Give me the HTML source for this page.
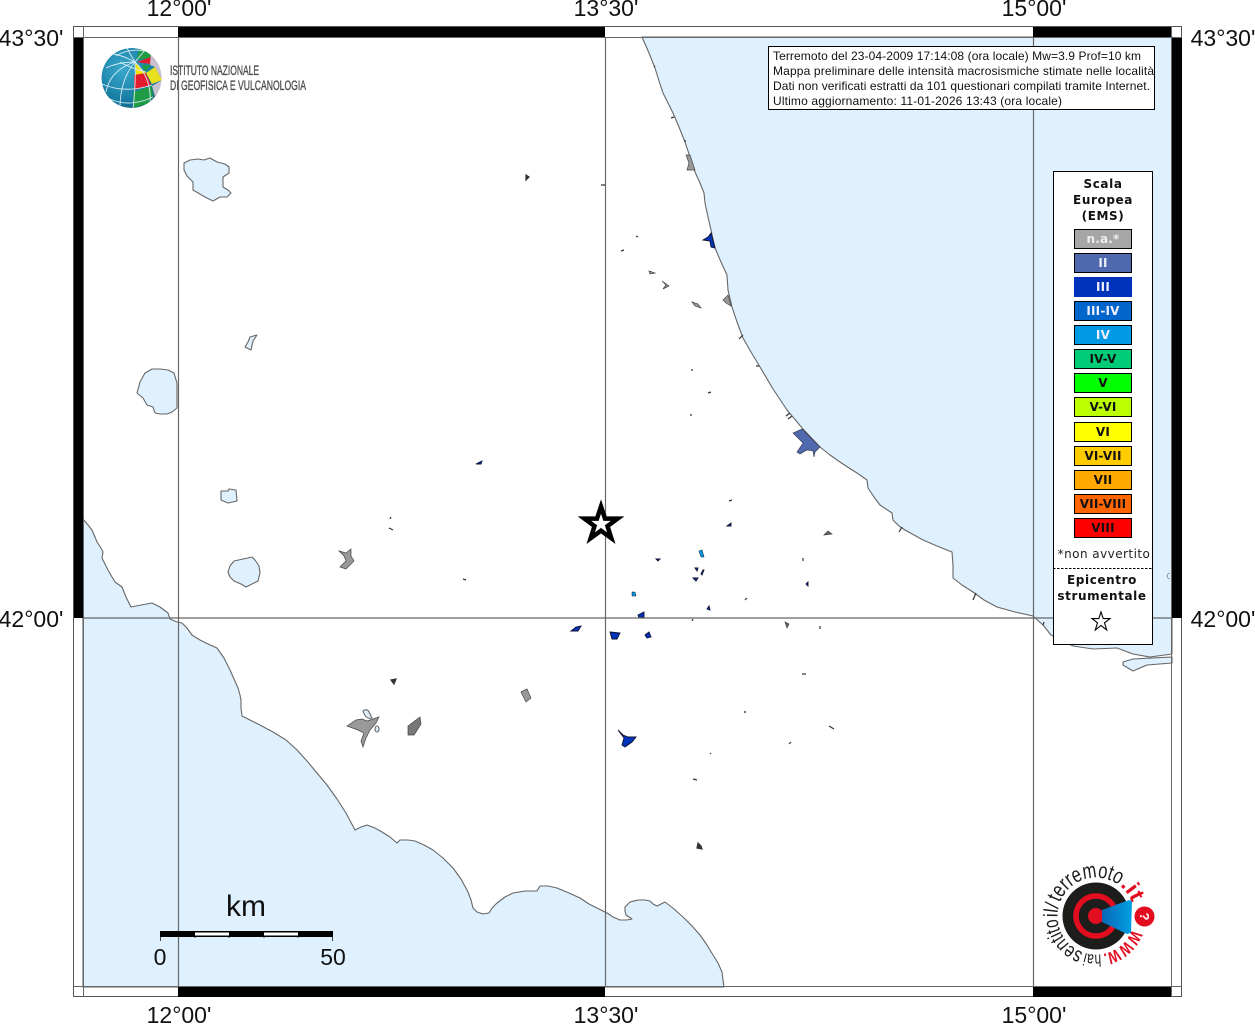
<!DOCTYPE html>
<html><head><meta charset="utf-8"><title>Mappa</title>
<style>html,body{margin:0;padding:0;background:#fff;width:1255px;height:1024px;overflow:hidden}svg{display:block}
.t{font-family:"Liberation Sans",Arial,sans-serif;font-size:23px;fill:#111}
.d{font-family:"DejaVu Sans",sans-serif;font-size:12px;font-weight:bold;text-anchor:middle;fill:#111;letter-spacing:.6px}
.s{font-family:"DejaVu Sans",sans-serif;font-size:12px;font-weight:bold;text-anchor:middle;fill:#111;letter-spacing:.2px}
.i{font-family:"Liberation Sans",Arial,sans-serif;font-size:12px;fill:#111}
.c{stroke:#666;stroke-width:1.1;fill:#dff1ff;stroke-linejoin:round}
.g{fill:#999;stroke:#444;stroke-width:.7}.b{fill:#03b;stroke:#113;stroke-width:.9}.k{fill:#333;stroke:#333;stroke-width:1.2}
</style></head><body>
<svg width="1255" height="1024" viewBox="0 0 1255 1024" xmlns="http://www.w3.org/2000/svg">
<defs>
<radialGradient id="gb" cx=".35" cy=".35" r=".8"><stop offset="0" stop-color="#3aa9cc"/><stop offset=".7" stop-color="#13789f"/><stop offset="1" stop-color="#0c5570"/></radialGradient>
<linearGradient id="cone" x1="0" y1="0" x2="1" y2="0"><stop offset="0" stop-color="#0b67b5"/><stop offset="1" stop-color="#00a0e3"/></linearGradient>
<clipPath id="gc"><circle cx="131.500" cy="78" r="30"/></clipPath>
<path id="ring" d="M1132.200,929.200 A38.500,38.500 0 1 1 1133.900,909.300"/>
</defs>
<rect x="83" y="37" width="1089" height="950" fill="#fff"/>
<!-- Adriatic sea -->
<path class="c" d="M642,37 L649,53 L655,68 L659,81 L663,93 L668,103 L673,113 L679,127 L685,142 L690,157 L695,172 L700,183 L704,193 L705,203 L708,217 L711,230 L715,248 L721,262 L727,275 L728,290 L732,307 L737,322 L743,338 L751,352 L760,367 L773,389 L787,410 L803,429 L820,447 L830,455 L840,462 L849,468 L857,473 L867,480 L868,488 L874,497 L880,505 L886,509 L892,513 L893,520 L899,526 L905,530 L914,535 L923,540 L937,546 L952,552 L953,565 L953,578 L962,585 L973,592 L984,600 L997,607 L1015,612 L1033,616 L1043,625 L1051,635 L1073,646 L1093,649 L1117,648 L1133,654 L1150,657 L1172,654 L1172,37 Z"/>
<path class="c" d="M1123,662 L1133,659 L1172,657 L1172,663 L1147,665 L1133,671 L1123,665 Z"/>
<!-- Tyrrhenian sea -->
<path class="c" d="M83,519 L88,525 L92,530 L95,537 L97,542 L101,548 L103,552 L102,558 L105,564 L108,570 L112,577 L115,582 L122,587 L126,597 L131,607 L141,605 L152,603 L160,607 L168,613 L170,619 L177,622 L182,623 L187,628 L192,635 L200,640 L208,644 L217,648 L224,658 L230,670 L234,679 L238,688 L240,695 L241,700 L241,708 L242,716 L258,724 L273,732 L286,740 L297,750 L307,761 L317,773 L327,785 L337,799 L346,813 L355,830 L361,827 L367,825 L375,828 L382,832 L390,837 L397,843 L400,840 L408,840 L415,841 L424,845 L433,850 L443,858 L453,868 L461,879 L468,892 L471,900 L473,908 L477,912 L483,914 L489,913 L492,908 L497,903 L505,897 L513,893 L525,891 L537,891 L540,886 L548,886 L557,888 L569,893 L580,898 L589,904 L597,908 L607,913 L613,917 L620,920 L627,920 L632,919 L626,915 L625,911 L625,907 L630,902 L638,900 L645,900 L650,901 L653,904 L657,906 L665,902 L674,909 L683,917 L692,926 L700,935 L707,945 L713,955 L718,963 L722,972 L723,980 L724,987 L83,987 Z"/>
<!-- lakes -->
<path class="c" d="M184,163 L190,160 L198,159 L204,160 L210,158 L217,162 L225,164 L229,167 L229,173 L223,177 L223,187 L228,190 L231,193 L227,197 L220,197 L213,201 L205,197 L193,190 L193,182 L187,176 L184,170 Z"/>
<path class="c" d="M137,393 L140,382 L145,373 L152,369 L160,369 L168,370 L174,373 L177,383 L177,408 L172,412 L167,414 L160,414 L155,413 L153,407 L147,405 L143,398 Z"/>
<path class="c" d="M250,337 L257,335 L253,341 L251,350 L245,347 L248,342 Z"/>
<path class="c" d="M221,491 L228,491 L229,489 L236,490 L237,501 L228,503 L221,500 Z"/>
<path class="c" d="M228,572 L230,566 L234,561 L243,559 L248,558 L252,557 L255,560 L259,566 L260,573 L258,581 L252,584 L246,587 L241,584 L234,581 L230,577 Z"/>
<!-- localities -->
<path class="g" d="M339,551 L346,553 L351,549 L351,556 L354,561 L346,569 L340,567 L346,561 L344,556 Z"/>
<path class="g" d="M347,726 L356,720 L362,719 L367,721 L379,717 L376,723 L370,730 L366,738 L363,747 L361,741 L364,733 L358,730 Z"/>
<path class="c" d="M363,711 Q367,708 369,712 L372,718 Q366,720 363,711 Z"/><ellipse class="c" cx="377" cy="729" rx="2" ry="3"/>
<path class="g" style="fill:#777" d="M408,726 L420,717 L421,724 L414,735 L408,735 Z"/>
<path class="g" d="M521,692 L527,689 L531,698 L526,702 Z"/>
<path class="k" d="M391,680 L396,679 L394,684 Z"/><path class="k" d="M389,528 L393,530M390,519 L391,517"/><path class="k" d="M463,579 L466,580"/>
<path class="k" d="M526,175 L529,177 L526,180 Z"/><path class="k" d="M601,185 L605,185M621,251 L624,250M636,236 L638,237"/>
<path class="g" d="M649,271 L655,273 L650,274 Z"/><path class="g" d="M662,281 L669,286 L663,289 L666,285 Z"/><path class="g" d="M692,302 L698,304 L701,308 L695,306 Z"/>
<path class="k" d="M691,370 L693,370M708,393 L711,392M690,415 L692,415M729,501 L732,500"/>
<path class="g" d="M686,155 L690,155 L695,170 L687,170 L689,163 Z"/>
<path class="b" d="M711,233 L715,248 L711,247 L710,241 L703,240 L708,237 Z"/>
<path class="g" d="M723,300 L728,295 L731,306 L726,303 Z"/>
<path class="k" d="M739,339 L743,335M786,416 L790,413M788,419 L792,416M655,67 L654,66M671,118 L674,117M684,141 L686,141M756,366 L759,366M899,532 L902,527M973,600 L976,593M1043,625 L1044,622"/>
<path fill="#5068ae" stroke="#334" stroke-width=".6" d="M793,433 L802,429 L820,447 L815,452 L814,457 L813,451 L807,450 L800,454 L797,452 L803,443 L797,437 Z"/>
<path class="b" d="M476,464 L482,461 L481,464 Z"/>
<path class="b" d="M571,631 L576,627 L581,626 L578,631 Z"/>
<path class="b" d="M610,632 L620,633 L617,639 L612,639 Z"/>
<path class="b" d="M645,635 L649,632 L651,637 L647,638 Z"/>
<path class="b" d="M638,615 L644,612 L644,617 L639,618 Z"/>
<path fill="#0099dd" stroke="#113" stroke-width=".5" d="M632,592 L635,592 L636,596 L632,596 Z"/>
<path class="b" d="M656,559 L660,559 L658,561 Z"/>
<path fill="#0099dd" stroke="#134" stroke-width=".6" d="M699,551 L702,550 L704,557 L701,557 Z"/>
<path class="b" d="M695,568 L698,568 L697,571 Z"/><path class="b" d="M701,574 L703,570 L704,570 L702,575 Z"/>
<path class="b" d="M693,578 L698,578 L696,581 Z"/><path class="b" d="M707,609 L709,606 L710,610 Z"/>
<path class="k" d="M692,621 L693,619"/><path class="b" d="M727,526 L731,523 L731,526 Z"/>
<path class="g" style="fill:#666" d="M824,535 L828,531 L832,534 Z"/><path class="k" d="M803,558 L803,561"/><path class="b" d="M806,584 L808,582 L808,586 Z"/>
<path class="k" d="M745,600 L747,598"/><path class="g" style="fill:#666" d="M785,622 L789,624 L787,628 Z"/><path class="k" d="M820,626 L820,629"/>
<path class="k" d="M802,674 L806,674"/><path class="k" style="stroke-width:1.4" d="M745,711 L745,713"/><path class="k" d="M829,726 L834,729"/><path class="k" d="M789,744 L791,742M710,753 L711,754M693,779 L697,780"/>
<path class="b" d="M618,730 L623,735 L628,737 L636,737 L632,742 L625,747 L622,745 L624,738 Z"/>
<path class="k" d="M698,843 L701,846 L702,849 L697,848 Z"/>
<path class="k" style="stroke-width:.5;fill:none" d="M1170,573 A3,3 0 0 0 1170,579"/>
<!-- grid -->
<g stroke="#666" stroke-width="1.2" fill="none">
<path d="M178.500,37V987M605.500,37V987M1033.500,37V987M83,618H1172"/>
</g>
<!-- frame -->
<rect x="73.500" y="26.500" width="1108" height="970" fill="none" stroke="#555" stroke-width="1"/>
<g fill="#000">
<rect x="178" y="27" width="427" height="10"/><rect x="1033" y="27" width="139" height="10"/>
<rect x="178" y="987" width="427" height="10"/><rect x="1033" y="987" width="139" height="10"/>
<rect x="74" y="37" width="9" height="581"/><rect x="1172" y="37" width="10" height="581"/>
</g>
<path d="M73,37.500H1182M73,986.500H1182M83.500,26V997M1171.500,26V997" stroke="#666" stroke-width="1" fill="none"/>
<!-- tick labels -->
<g class="t" text-anchor="middle">
<text x="179" y="16">12°00'</text><text x="606" y="16">13°30'</text><text x="1034" y="16">15°00'</text>
<text x="179" y="1023">12°00'</text><text x="606" y="1023">13°30'</text><text x="1034" y="1023">15°00'</text>
<text x="31" y="46">43°30'</text><text x="31" y="627">42°00'</text>
<text x="1223" y="46">43°30'</text><text x="1223" y="627">42°00'</text>
</g>
<!-- star -->
<path d="M601,506.500 L605,518.600 L617.600,518.600 L607.500,526.100 L611.300,538.200 L601,530.700 L590.700,538.200 L594.500,526.100 L584.400,518.600 L597,518.600 Z" fill="#fff" stroke="#000" stroke-width="4.500"/>
<!-- scale -->
<g>
<path d="M160.500,933V941M195,933V938M229,933V938M264,933V938M298,933V938M332.500,933V941" stroke="#444" stroke-width="1" fill="none"/>
<rect x="160" y="931" width="173" height="6" fill="#000"/>
<rect x="195" y="932.500" width="34" height="3" fill="#fff"/><rect x="264" y="932.500" width="34" height="3" fill="#fff"/>
<text x="246" y="916" text-anchor="middle" style="font:30px 'Liberation Sans',sans-serif;fill:#111">km</text>
<text x="160" y="965" text-anchor="middle" class="t">0</text><text x="333" y="965" text-anchor="middle" class="t">50</text>
</g>
<!-- INGV logo -->
<g clip-path="url(#gc)">
<circle cx="131.500" cy="78" r="30" fill="url(#gb)"/>
<path fill="#1f9a45" d="M136,60 L140,48 L150,52 L152,58 Z"/>
<path fill="#e21b2d" d="M137,62 L151,57 L152,64 L142,63 Z"/>
<path fill="#c9c0d0" d="M151,52 L162,62 L162,80 L155,67 L150,65 Z"/>
<path fill="#f4e100" d="M135,63 L146,73 L136,75 Z"/>
<path fill="#1f9a45" d="M142,65 L151,65 L145,72 Z"/>
<path fill="#e9e020" d="M146,73 L155,67 L162,80 L152,84 Z"/>
<path fill="#e21b2d" d="M134,75 L146,73 L151,85 L134,90 Z"/>
<path fill="#c9c0d0" d="M152,86 L162,80 L160,90 L155,97 Z"/>
<path fill="#1f9a45" d="M133,92 L152,86 L153,97 L147,104 L133,108 Z"/>
<path fill="#e21b2d" d="M155,96 L160,92 L154,102 Z"/>
<g fill="none" stroke="#d8ecf4" stroke-width=".9">
<path d="M135,62 Q130,54 127,48M135,62 Q122,55 113,54M135,62 Q110,70 106,92M135,62 Q120,80 120,108M135,62 Q136,85 133,108M135,62 Q152,78 150,104M135,62 L146,49"/>
<path d="M116,56 Q130,47 150,52M106,68 Q118,62 135,62 M102,84 Q125,94 152,85M110,99 Q130,108 153,97M120,62 Q130,68 146,72"/>
</g></g>
<text x="170" y="75" textLength="89" lengthAdjust="spacingAndGlyphs" style="font:13.500px 'Liberation Sans',sans-serif;fill:#4d4d4d;stroke:#4d4d4d;stroke-width:.35">ISTITUTO NAZIONALE</text>
<text x="170" y="90" textLength="136" lengthAdjust="spacingAndGlyphs" style="font:13.500px 'Liberation Sans',sans-serif;fill:#4d4d4d;stroke:#4d4d4d;stroke-width:.35">DI GEOFISICA E VULCANOLOGIA</text>
<!-- info box -->
<rect x="768.500" y="46.500" width="386" height="63" fill="#fff" stroke="#000" stroke-width="1"/>
<g class="i">
<text x="773" y="60" textLength="368">Terremoto del 23-04-2009 17:14:08 (ora locale) Mw=3.9 Prof=10 km</text>
<text x="773" y="75" textLength="381">Mappa preliminare delle intensità macrosismiche stimate nelle località</text>
<text x="773" y="90" textLength="377">Dati non verificati estratti da 101 questionari compilati tramite Internet.</text>
<text x="773" y="105" textLength="289">Ultimo aggiornamento: 11-01-2026 13:43 (ora locale)</text>
</g>
<!-- legend -->
<rect x="1053.500" y="171.500" width="99" height="473" fill="#fff" stroke="#000" stroke-width="1"/>
<text class="d" x="1103" y="188">Scala</text><text class="d" x="1103" y="204">Europea</text><text class="d" x="1103" y="220">(EMS)</text>
<g stroke="#000" stroke-width="1">
<rect x="1074.500" y="229.500" width="57" height="19" fill="#a6a6a6"/>
<rect x="1074.500" y="253.500" width="57" height="19" fill="#5068ae"/>
<rect x="1074.500" y="277.500" width="57" height="19" fill="#0033bb" stroke="#0033bb"/>
<rect x="1074.500" y="301.500" width="57" height="19" fill="#0066cc"/>
<rect x="1074.500" y="325.500" width="57" height="19" fill="#0099e6"/>
<rect x="1074.500" y="349.500" width="57" height="19" fill="#00cc77"/>
<rect x="1074.500" y="373.500" width="57" height="19" fill="#00ff00"/>
<rect x="1074.500" y="397.500" width="57" height="19" fill="#bbff00"/>
<rect x="1074.500" y="422.500" width="57" height="19" fill="#ffff00"/>
<rect x="1074.500" y="446.500" width="57" height="19" fill="#ffcc00"/>
<rect x="1074.500" y="470.500" width="57" height="19" fill="#ffaa00"/>
<rect x="1074.500" y="494.500" width="57" height="19" fill="#ff6600"/>
<rect x="1074.500" y="518.500" width="57" height="19" fill="#ff0000"/>
</g>
<g class="s">
<text x="1103" y="243" style="fill:#eee">n.a.*</text><text x="1103" y="267" style="fill:#eef">II</text><text x="1103" y="291" style="fill:#eef">III</text><text x="1103" y="315" style="fill:#eef">III-IV</text><text x="1103" y="339" style="fill:#eef">IV</text>
<text x="1103" y="363">IV-V</text><text x="1103" y="387">V</text><text x="1103" y="411">V-VI</text><text x="1103" y="436">VI</text><text x="1103" y="460">VI-VII</text><text x="1103" y="484">VII</text><text x="1103" y="508">VII-VIII</text><text x="1103" y="532">VIII</text>
</g>
<text x="1104" y="558" text-anchor="middle" style="font:12px 'DejaVu Sans',sans-serif;fill:#222;letter-spacing:.45px">*non avvertito</text>
<path d="M1053,568.500H1152" stroke="#000" stroke-width="1" stroke-dasharray="2.500 1.500"/>
<text class="d" x="1102" y="584">Epicentro</text><text class="d" x="1102" y="600">strumentale</text>
<path d="M1101,612 L1103.200,618.600 L1110,618.600 L1104.500,622.800 L1106.700,630 L1101,625.500 L1095.300,630 L1097.500,622.800 L1092,618.600 L1098.800,618.600 Z" fill="#fff" stroke="#000" stroke-width="1.100"/>
<!-- hai sentito logo -->
<circle cx="1096" cy="916" r="33.500" fill="#1d1d1b"/>
<circle cx="1096" cy="916" r="20" fill="none" stroke="#e30d20" stroke-width="5.500"/>
<circle cx="1096" cy="916" r="8" fill="#e30d20"/>
<path d="M1102,910 L1129,900 L1132,901 L1131,933 L1127,934 L1102,922 Z" fill="url(#cone)"/>
<circle cx="1144.500" cy="916.500" r="10" fill="#e30d20"/>
<text x="1144.500" y="921" text-anchor="middle" transform="rotate(90 1144.500 916.500)" style="font:bold 13px 'Liberation Sans',sans-serif;fill:#fff">?</text>
<text style="font:bold 17px 'Liberation Sans',sans-serif"><textPath href="#ring" startOffset="0" textLength="40" lengthAdjust="spacingAndGlyphs" fill="#e30d20">WWW.</textPath></text>
<text style="font:17px 'Liberation Sans',sans-serif"><textPath href="#ring" startOffset="42" textLength="16" lengthAdjust="spacingAndGlyphs" fill="#1d1d1b">hai</textPath></text>
<text style="font:21px 'Liberation Sans',sans-serif"><textPath href="#ring" startOffset="60" textLength="45" lengthAdjust="spacingAndGlyphs" fill="#1d1d1b">sentito</textPath></text>
<text style="font:20px 'Liberation Sans',sans-serif"><textPath href="#ring" startOffset="106" textLength="13" lengthAdjust="spacingAndGlyphs" fill="#1d1d1b">il/</textPath></text>
<text style="font:22px 'Liberation Sans',sans-serif"><textPath href="#ring" startOffset="121" textLength="71" lengthAdjust="spacingAndGlyphs" fill="#1d1d1b">terremoto</textPath></text>
<text style="font:bold 22px 'Liberation Sans',sans-serif"><textPath href="#ring" startOffset="193" textLength="21" lengthAdjust="spacingAndGlyphs" fill="#e30d20">.it</textPath></text>
</svg>
</body></html>
